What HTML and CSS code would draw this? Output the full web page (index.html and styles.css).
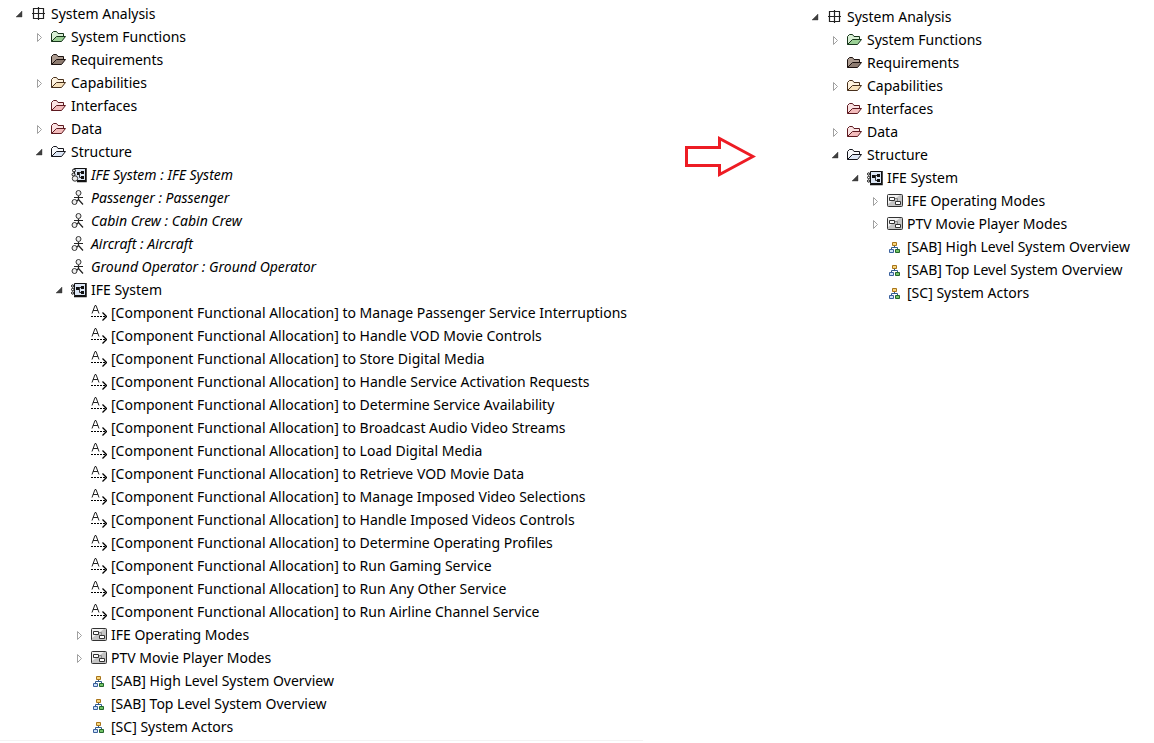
FILE: index.html
```
<!DOCTYPE html>
<html lang="en">
<head>
<meta charset="utf-8">
<title>System Analysis</title>
<link rel="stylesheet" href="styles.css">
</head>
<body>
<svg class="sprite" aria-hidden="true">
  <symbol id="open" viewBox="0 0 16 16"><path d="M11 5v6H5z" fill="#404040" stroke="#333" stroke-width=".4"/></symbol>
  <symbol id="closed" viewBox="0 0 16 16"><path d="M6.500 4.500v8l4-4z" fill="#fff" stroke="#a0a0a0"/></symbol>
  <symbol id="grid" viewBox="0 0 16 16"><path d="M2.500 2.500h10v10h-10zM7.500 1v13M1 7.500h13" fill="none" stroke="#222" stroke-width="1.200"/></symbol>
  <symbol id="folder" viewBox="0 0 16 16">
    <path d="M.5 12.500v-8l2-2h3l1.500 2h5.500v3" class="back"/>
    <path d="M.5 12.500h10l4-5h-9z" class="front"/>
  </symbol>
  <symbol id="system" viewBox="0 0 16 16">
    <path d="M3.500 1.500h11v12h-11z" fill="#dce6f5" stroke="#111"/><path d="M15 1v13.500H3" fill="none" stroke="#111" stroke-width="1.500"/>
    <g fill="#fff" stroke="#111"><circle cx="1.700" cy="4" r="1.200"/><circle cx="1.700" cy="7.500" r="1.200"/><circle cx="1.700" cy="11" r="1.200"/></g>
    <path d="M3 3.500h1M3 7.500h1M3 11h1" stroke="#111"/>
    <path d="M5 5h3v3H5zM10 4h3v3h-3zM10 9h3v3h-3z" fill="#111"/><path d="M8 5.500h2M8.500 6v4.500H10" fill="none" stroke="#333"/>
  </symbol>
  <symbol id="instance" viewBox="0 0 16 16">
    <path d="M3.500 1.500h11v12h-11z" fill="#dce6f5" stroke="#111"/><path d="M15 1v13.500H6" fill="none" stroke="#111" stroke-width="1.500"/>
    <path d="M6 5h3v3H6zM10 4h3v3h-3zM10 9h3v3h-3z" fill="#111"/><path d="M8 5.500h2M8.500 6v4.500H10" fill="none" stroke="#333"/>
    <circle cx="3" cy="3.500" r="1.500" fill="#eee" stroke="#111"/><circle cx="2.500" cy="7.500" r="1.500" fill="#eee" stroke="#111"/><circle cx="4" cy="11.500" r="2.700" fill="#eee" stroke="#333"/>
  </symbol>
  <symbol id="actor" viewBox="0 0 16 16">
    <path d="M7.500 6v4M3 7.500h9M7.500 9.500l4.500 5M7.500 9.500L5 12" fill="none" stroke="#222" stroke-width="1.200"/>
    <circle cx="7.500" cy="3" r="2.500" fill="#eee" stroke="#333"/><circle cx="3.500" cy="12" r="2.500" fill="#eee" stroke="#333"/>
  </symbol>
  <symbol id="allocation" viewBox="0 0 16 16">
    <path d="M1 8.500L4 .5h1l3 8M2 5.500h5" fill="none" stroke="#222"/><path d="M0 11.500h14" fill="none" stroke="#000" stroke-dasharray="2 1"/><path d="M11.500 7.500l4 4-4 4" fill="none" stroke="#000" stroke-width="1.300"/>
  </symbol>
  <symbol id="modes" viewBox="0 0 16 16">
    <rect x=".5" y="1.500" width="15" height="12" rx="1" fill="#c4c4c4" stroke="#333"/><path d="M1 2h12L1 11z" fill="#f2f2f2"/>
    <path d="M2.500 4.500h5v3h-5zM8.500 8.500h5v3h-5z" fill="#fff" stroke="#333"/><path d="M8 5.500h2.500V8" fill="none" stroke="#888"/>
  </symbol>
  <symbol id="diagram" viewBox="0 0 16 16">
    <path d="M7.500 6v3M4.500 11V8.500h6V11" fill="none" stroke="#315b8d"/>
    <path d="M5.500 3.500h4v3h-4z" fill="#f8d77c" stroke="#a8741b"/><path d="M2.500 10.500h4v3h-4z" fill="#cee2f7" stroke="#3a609d"/><path d="M8.500 10.500h4v3h-4z" fill="#72c367" stroke="#23652b"/>
  </symbol>
</svg>
<main class="page">
  <section class="panel">
    <ul class="tree">
      <li><div class="row"><button class="toggle" aria-label="Collapse System Analysis"><svg><use href="#open"/></svg></button><svg><use href="#grid"/></svg><span>System Analysis</span></div>
        <ul>
          <li><div class="row"><button class="toggle" aria-label="Expand System Functions"><svg><use href="#closed"/></svg></button><svg class="green"><use href="#folder"/></svg><span>System Functions</span></div></li>
          <li><div class="row leaf"><svg class="brown"><use href="#folder"/></svg><span>Requirements</span></div></li>
          <li><div class="row"><button class="toggle" aria-label="Expand Capabilities"><svg><use href="#closed"/></svg></button><svg class="tan"><use href="#folder"/></svg><span>Capabilities</span></div></li>
          <li><div class="row leaf"><svg class="red"><use href="#folder"/></svg><span>Interfaces</span></div></li>
          <li><div class="row"><button class="toggle" aria-label="Expand Data"><svg><use href="#closed"/></svg></button><svg class="red"><use href="#folder"/></svg><span>Data</span></div></li>
          <li><div class="row"><button class="toggle" aria-label="Collapse Structure"><svg><use href="#open"/></svg></button><svg class="blue"><use href="#folder"/></svg><span>Structure</span></div>
            <ul>
              <li><div class="row leaf part"><svg><use href="#instance"/></svg><span>IFE System : IFE System</span></div></li>
              <li><div class="row leaf part"><svg><use href="#actor"/></svg><span>Passenger : Passenger</span></div></li>
              <li><div class="row leaf part"><svg><use href="#actor"/></svg><span>Cabin Crew : Cabin Crew</span></div></li>
              <li><div class="row leaf part"><svg><use href="#actor"/></svg><span>Aircraft : Aircraft</span></div></li>
              <li><div class="row leaf part"><svg><use href="#actor"/></svg><span>Ground Operator : Ground Operator</span></div></li>
              <li><div class="row"><button class="toggle" aria-label="Collapse IFE System"><svg><use href="#open"/></svg></button><svg><use href="#system"/></svg><span>IFE System</span></div>
                <ul>
                  <li><div class="row leaf"><svg><use href="#allocation"/></svg><span>[Component Functional Allocation] to Manage Passenger Service Interruptions</span></div></li>
                  <li><div class="row leaf"><svg><use href="#allocation"/></svg><span>[Component Functional Allocation] to Handle VOD Movie Controls</span></div></li>
                  <li><div class="row leaf"><svg><use href="#allocation"/></svg><span>[Component Functional Allocation] to Store Digital Media</span></div></li>
                  <li><div class="row leaf"><svg><use href="#allocation"/></svg><span>[Component Functional Allocation] to Handle Service Activation Requests</span></div></li>
                  <li><div class="row leaf"><svg><use href="#allocation"/></svg><span>[Component Functional Allocation] to Determine Service Availability</span></div></li>
                  <li><div class="row leaf"><svg><use href="#allocation"/></svg><span>[Component Functional Allocation] to Broadcast Audio Video Streams</span></div></li>
                  <li><div class="row leaf"><svg><use href="#allocation"/></svg><span>[Component Functional Allocation] to Load Digital Media</span></div></li>
                  <li><div class="row leaf"><svg><use href="#allocation"/></svg><span>[Component Functional Allocation] to Retrieve VOD Movie Data</span></div></li>
                  <li><div class="row leaf"><svg><use href="#allocation"/></svg><span>[Component Functional Allocation] to Manage Imposed Video Selections</span></div></li>
                  <li><div class="row leaf"><svg><use href="#allocation"/></svg><span>[Component Functional Allocation] to Handle Imposed Videos Controls</span></div></li>
                  <li><div class="row leaf"><svg><use href="#allocation"/></svg><span>[Component Functional Allocation] to Determine Operating Profiles</span></div></li>
                  <li><div class="row leaf"><svg><use href="#allocation"/></svg><span>[Component Functional Allocation] to Run Gaming Service</span></div></li>
                  <li><div class="row leaf"><svg><use href="#allocation"/></svg><span>[Component Functional Allocation] to Run Any Other Service</span></div></li>
                  <li><div class="row leaf"><svg><use href="#allocation"/></svg><span>[Component Functional Allocation] to Run Airline Channel Service</span></div></li>
                  <li><div class="row"><button class="toggle" aria-label="Expand IFE Operating Modes"><svg><use href="#closed"/></svg></button><svg><use href="#modes"/></svg><span>IFE Operating Modes</span></div></li>
                  <li><div class="row"><button class="toggle" aria-label="Expand PTV Movie Player Modes"><svg><use href="#closed"/></svg></button><svg><use href="#modes"/></svg><span>PTV Movie Player Modes</span></div></li>
                  <li><div class="row leaf"><svg><use href="#diagram"/></svg><span>[SAB] High Level System Overview</span></div></li>
                  <li><div class="row leaf"><svg><use href="#diagram"/></svg><span>[SAB] Top Level System Overview</span></div></li>
                  <li><div class="row leaf"><svg><use href="#diagram"/></svg><span>[SC] System Actors</span></div></li>
                </ul>
              </li>
            </ul>
          </li>
        </ul>
      </li>
    </ul>
  </section>
  <div class="becomes">
    <svg class="arrow" viewBox="0 0 72 42" role="img" aria-label="becomes"><path d="M2.500 11.500h33v-9L69 20.500l-33.500 18v-9h-33z" fill="#fff" stroke="#ed1c24" stroke-width="3"/></svg>
  </div>
  <section class="result">
    <ul class="tree">
      <li><div class="row"><button class="toggle" aria-label="Collapse System Analysis"><svg><use href="#open"/></svg></button><svg><use href="#grid"/></svg><span>System Analysis</span></div>
        <ul>
          <li><div class="row"><button class="toggle" aria-label="Expand System Functions"><svg><use href="#closed"/></svg></button><svg class="green"><use href="#folder"/></svg><span>System Functions</span></div></li>
          <li><div class="row leaf"><svg class="brown"><use href="#folder"/></svg><span>Requirements</span></div></li>
          <li><div class="row"><button class="toggle" aria-label="Expand Capabilities"><svg><use href="#closed"/></svg></button><svg class="tan"><use href="#folder"/></svg><span>Capabilities</span></div></li>
          <li><div class="row leaf"><svg class="red"><use href="#folder"/></svg><span>Interfaces</span></div></li>
          <li><div class="row"><button class="toggle" aria-label="Expand Data"><svg><use href="#closed"/></svg></button><svg class="red"><use href="#folder"/></svg><span>Data</span></div></li>
          <li><div class="row"><button class="toggle" aria-label="Collapse Structure"><svg><use href="#open"/></svg></button><svg class="blue"><use href="#folder"/></svg><span>Structure</span></div>
            <ul>
              <li><div class="row"><button class="toggle" aria-label="Collapse IFE System"><svg><use href="#open"/></svg></button><svg><use href="#system"/></svg><span>IFE System</span></div>
                <ul>
                  <li><div class="row"><button class="toggle" aria-label="Expand IFE Operating Modes"><svg><use href="#closed"/></svg></button><svg><use href="#modes"/></svg><span>IFE Operating Modes</span></div></li>
                  <li><div class="row"><button class="toggle" aria-label="Expand PTV Movie Player Modes"><svg><use href="#closed"/></svg></button><svg><use href="#modes"/></svg><span>PTV Movie Player Modes</span></div></li>
                  <li><div class="row leaf"><svg><use href="#diagram"/></svg><span>[SAB] High Level System Overview</span></div></li>
                  <li><div class="row leaf"><svg><use href="#diagram"/></svg><span>[SAB] Top Level System Overview</span></div></li>
                  <li><div class="row leaf"><svg><use href="#diagram"/></svg><span>[SC] System Actors</span></div></li>
                </ul>
              </li>
            </ul>
          </li>
        </ul>
      </li>
    </ul>
  </section>
</main>
</body>
</html>
```
FILE: styles.css
```
* { box-sizing: border-box; }
body { margin: 0; background: #fff; color: #000; font: 14px/23px "Noto Sans", "Open Sans", sans-serif; }
.sprite { position: absolute; width: 0; height: 0; }
.page { display: grid; grid-template-columns: 643fr 153fr 358fr; align-items: start; }
.panel { min-width: 0; padding: 2px 0; border-bottom: 1px solid #f3f3f3; }
.result { min-width: 0; padding-top: 5px; }
.becomes { padding: 136px 0 0 41px; }
.arrow { display: block; width: 72px; height: 42px; }
.tree, .tree ul { list-style: none; margin: 0; padding: 0; }
.tree { padding-left: 11px; }
.tree ul { padding-left: 20px; }
.row { display: flex; align-items: center; gap: 4px; height: 23px; white-space: nowrap; }
.row svg { display: block; flex: none; width: 16px; height: 16px; }
.leaf { padding-left: 20px; }
.part { font-style: italic; }
.toggle { flex: none; width: 16px; height: 16px; padding: 0; border: 0; background: none; }
.back { fill: var(--back); stroke: var(--line); }
.front { fill: var(--front); stroke: var(--line); }
.green { --back: #d9f0d5; --front: #9bd095; --line: #17351b; }
.brown { --back: #ad9c91; --front: #8d7b70; --line: #1c1210; }
.tan { --back: #fff3df; --front: #f8e2bc; --line: #48301c; }
.red { --back: #fbe3e3; --front: #f3bcbc; --line: #5d1a20; }
.blue { --back: #f7f9fc; --front: #dce6f5; --line: #15151c; }
```
